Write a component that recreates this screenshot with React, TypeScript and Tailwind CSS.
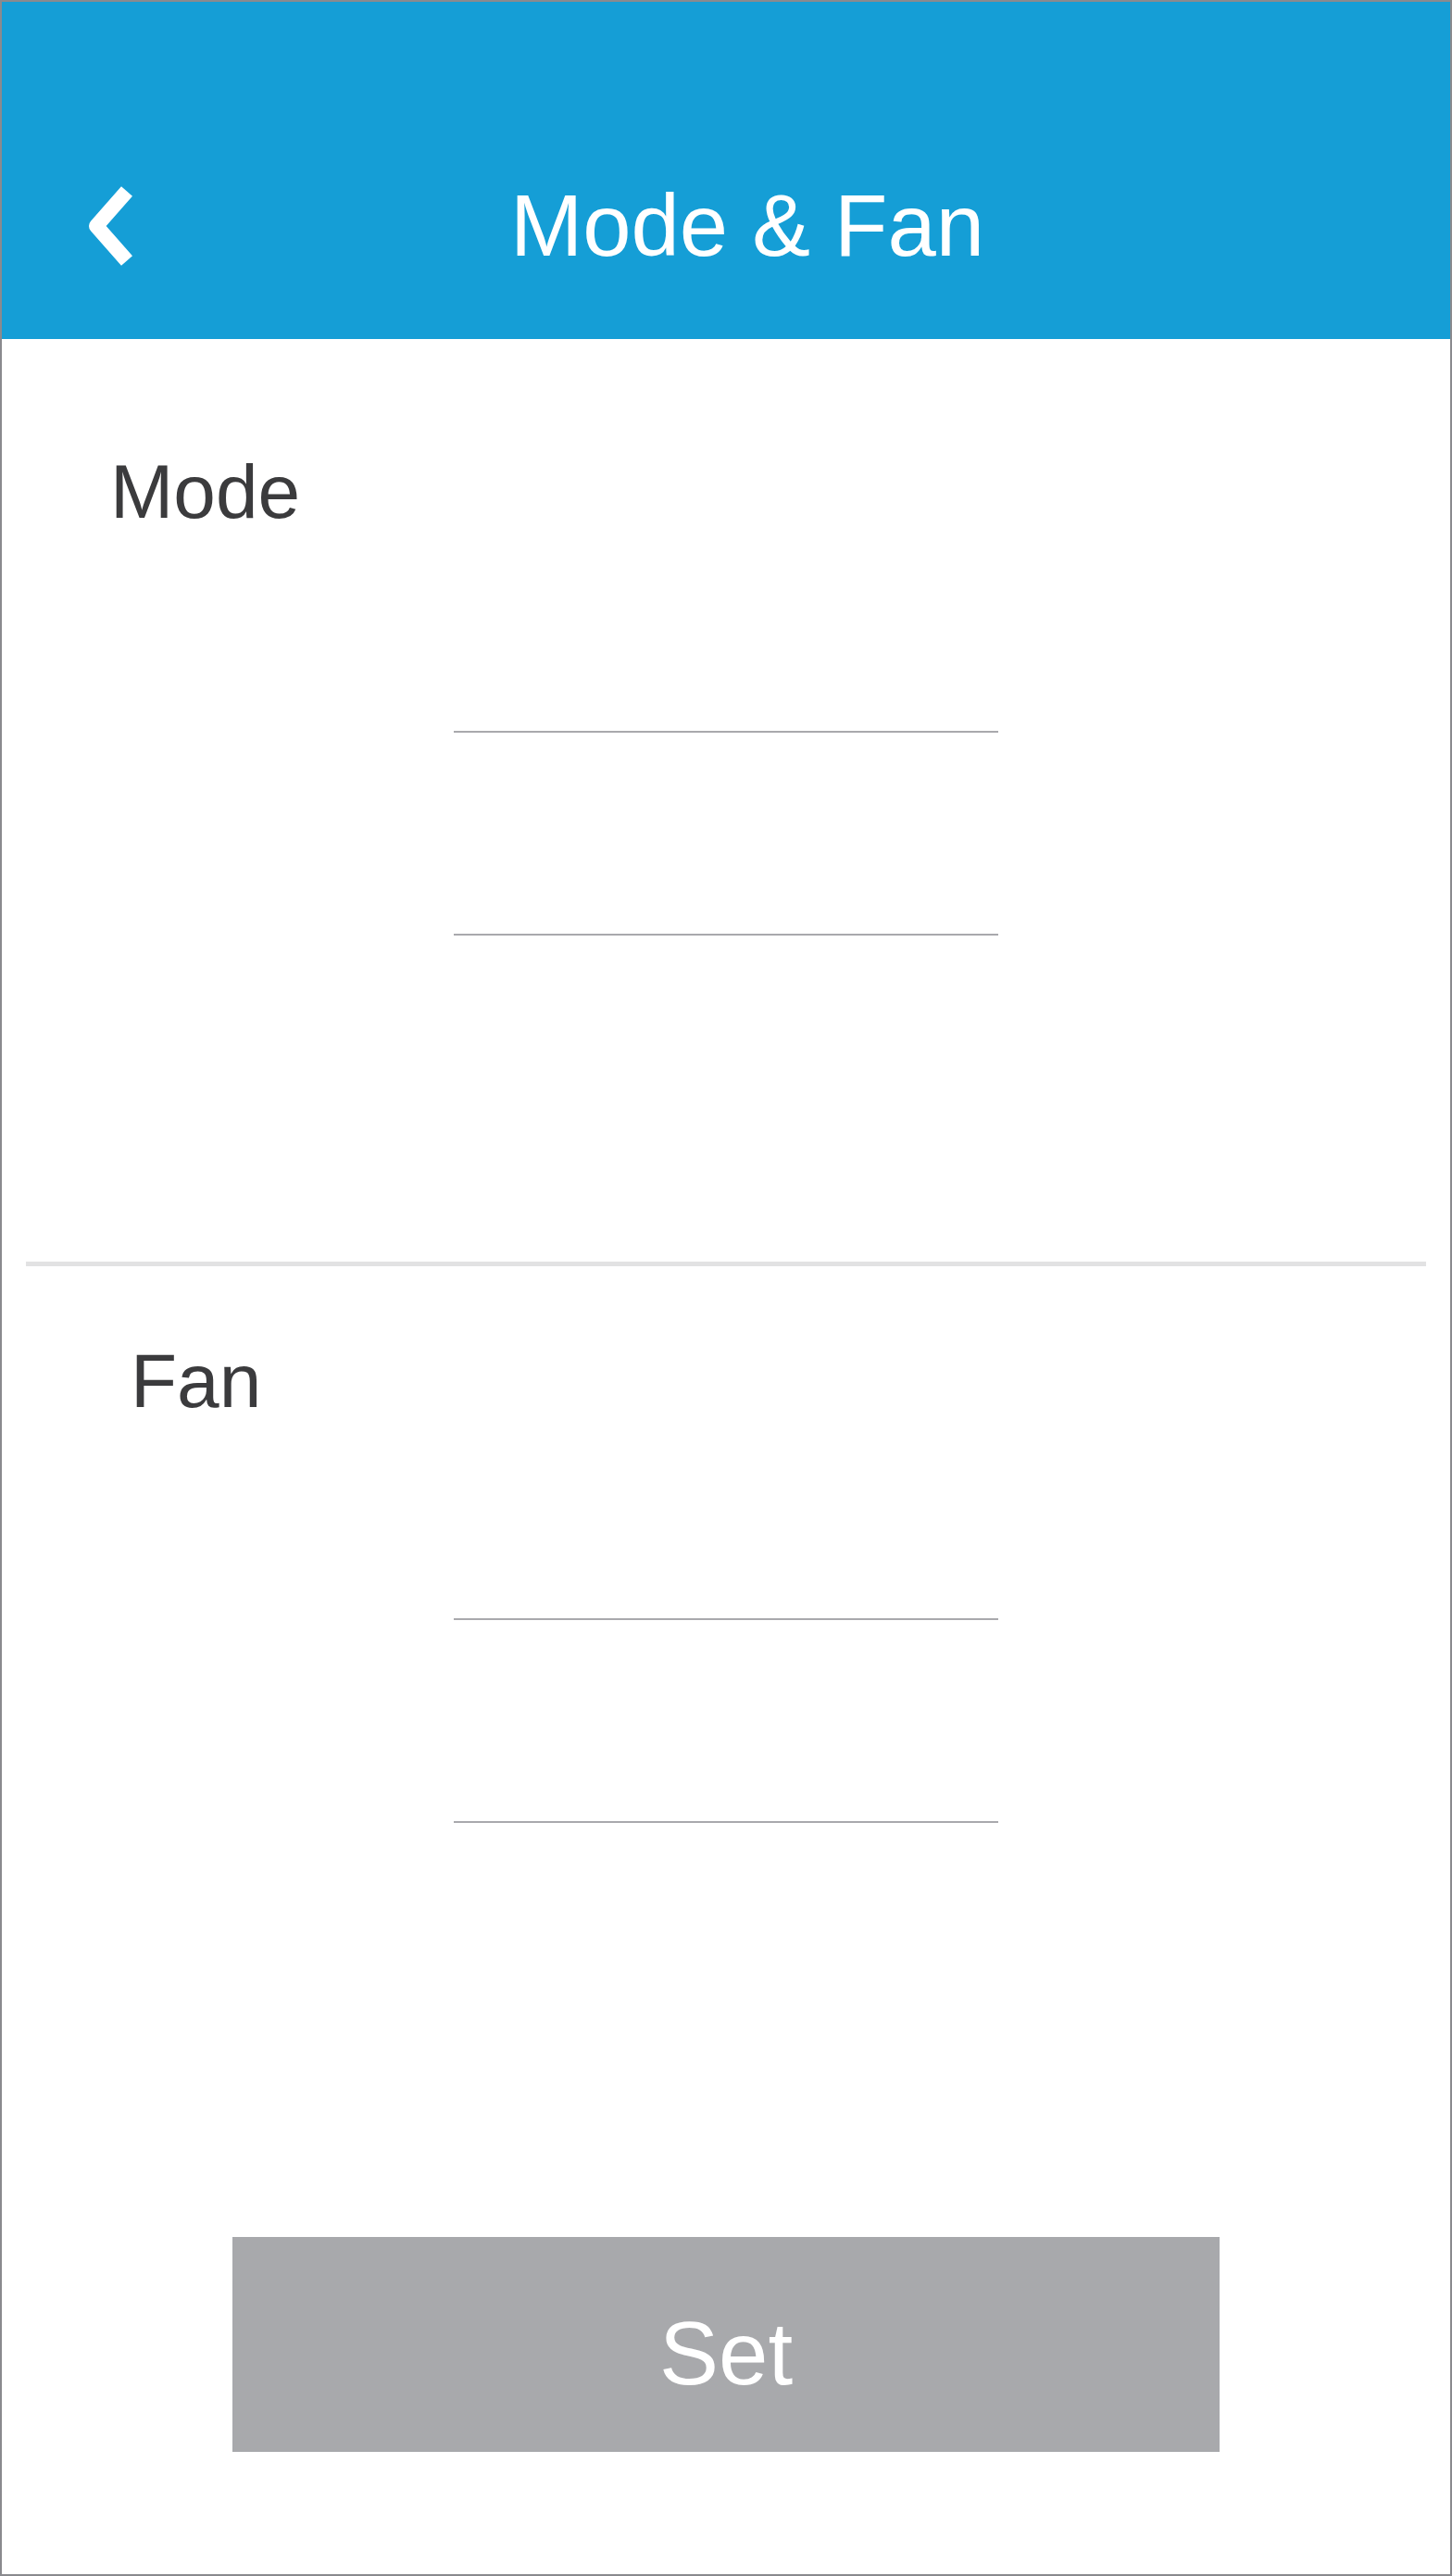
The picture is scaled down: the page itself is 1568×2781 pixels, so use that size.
import React from 'react'

const FONT = { fontFamily: '"Liberation Sans", Arial, sans-serif' }

function BackChevron() {
  return (
    <svg width="48" height="86" viewBox="0 0 48 86" fill="none">
      <path
        d="M42 5.5 L9 43 L42 80.5"
        stroke="#ffffff"
        strokeWidth="16"
        strokeLinecap="butt"
        strokeLinejoin="round"
      />
    </svg>
  )
}

function Picker() {
  return (
    <div className="flex flex-col items-center">
      <div className="w-[588px] h-[2px] bg-[#a9a9ad]" />
      <div className="h-[217px]" />
      <div className="w-[588px] h-[2px] bg-[#a9a9ad]" />
    </div>
  )
}

export default function App() {
  return (
    <div
      className="w-[1568px] h-[2781px] border-2 border-[#8a8a8e] bg-white flex flex-col"
      style={FONT}
    >
      {/* Header */}
      <div className="h-[364px] bg-[#159ed6] flex items-end pb-[79px]">
        <div className="h-[86px] w-full flex items-center pl-[93px] pr-[95px]">
          <button className="w-[48px] h-[86px] flex items-center">
            <BackChevron />
          </button>
          <div className="flex-1 text-center text-white text-[94px] leading-none">
            Mode &amp; Fan
          </div>
        </div>
      </div>

      {/* Mode */}
      <div className="pt-[124px] pl-[117px] text-[82px] leading-none text-[#3b3b3d]">
        Mode
      </div>
      <div className="pt-[217px]">
        <Picker />
      </div>

      {/* Divider */}
      <div className="mt-[352px] mx-[26px] h-[5px] bg-[#e2e2e3]" />

      {/* Fan */}
      <div className="pt-[83px] pl-[139px] text-[82px] leading-none text-[#3b3b3d]">
        Fan
      </div>
      <div className="pt-[215px]">
        <Picker />
      </div>

      {/* Set button */}
      <div className="mt-[447px] flex justify-center">
        <button className="w-[1066px] h-[232px] bg-[#a8a9ac] text-white text-[96px] leading-none flex items-center justify-center pt-[20px]">
          Set
        </button>
      </div>
    </div>
  )
}
